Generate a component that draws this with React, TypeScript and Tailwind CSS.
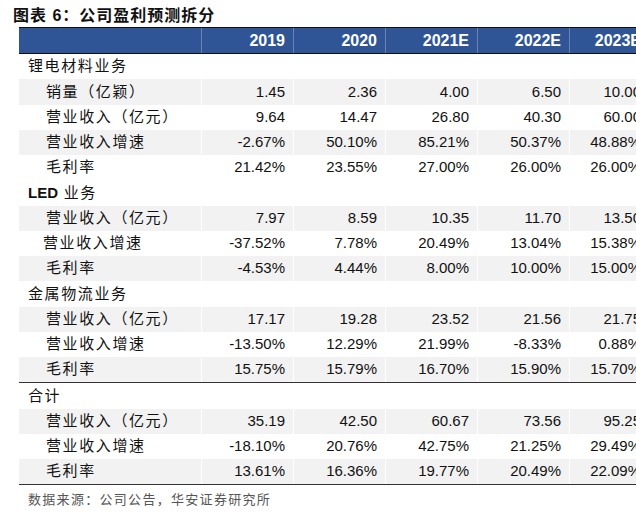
import React from 'react';

type Row = {
  label: string;
  values?: string[];
  kind: 'section' | 'item';
  shaded?: boolean;
  indent?: string;
};

const years = ['2019', '2020', '2021E', '2022E', '2023E'];

const rows: Row[] = [
  { label: '锂电材料业务', kind: 'section' },
  { label: '销量（亿颖）', kind: 'item', shaded: true, values: ['1.45', '2.36', '4.00', '6.50', '10.00'] },
  { label: '营业收入（亿元）', kind: 'item', values: ['9.64', '14.47', '26.80', '40.30', '60.00'] },
  { label: '营业收入增速', kind: 'item', shaded: true, values: ['-2.67%', '50.10%', '85.21%', '50.37%', '48.88%'] },
  { label: '毛利率', kind: 'item', values: ['21.42%', '23.55%', '27.00%', '26.00%', '26.00%'] },
  { label: 'LED 业务', kind: 'section' },
  { label: '营业收入（亿元）', kind: 'item', shaded: true, values: ['7.97', '8.59', '10.35', '11.70', '13.50'] },
  { label: '营业收入增速', kind: 'item', indent: 'pl-[24px]', values: ['-37.52%', '7.78%', '20.49%', '13.04%', '15.38%'] },
  { label: '毛利率', kind: 'item', shaded: true, values: ['-4.53%', '4.44%', '8.00%', '10.00%', '15.00%'] },
  { label: '金属物流业务', kind: 'section' },
  { label: '营业收入（亿元）', kind: 'item', shaded: true, values: ['17.17', '19.28', '23.52', '21.56', '21.75'] },
  { label: '营业收入增速', kind: 'item', values: ['-13.50%', '12.29%', '21.99%', '-8.33%', '0.88%'] },
  { label: '毛利率', kind: 'item', shaded: true, values: ['15.75%', '15.79%', '16.70%', '15.90%', '15.70%'] },
];

const totals: Row[] = [
  { label: '合计', kind: 'section' },
  { label: '营业收入（亿元）', kind: 'item', shaded: true, values: ['35.19', '42.50', '60.67', '73.56', '95.25'] },
  { label: '营业收入增速', kind: 'item', values: ['-18.10%', '20.76%', '42.75%', '21.25%', '29.49%'] },
  { label: '毛利率', kind: 'item', shaded: true, values: ['13.61%', '16.36%', '19.77%', '20.49%', '22.09%'] },
];

const font = "font-['Liberation_Sans','Noto_Sans_CJK_SC',sans-serif]";

// last column is narrower, it runs off the right edge like the source image
const colW = (i: number) => (i === 4 ? 'w-[80px]' : 'w-[92px]');

function TableRow({ row }: { row: Row }) {
  const bg = row.shaded ? 'bg-[#f2f2f2]' : 'bg-white';
  return (
    <div className={`flex h-[25.25px] items-center ${bg}`}>
      <div
        className={`w-[182px] shrink-0 tracking-[1.6px] text-[15px] text-[#111] ${
          row.kind === 'section' ? 'pl-[9px]' : row.indent ?? 'pl-[27px]'
        }`}
      >
        {row.label === 'LED 业务' ? (
          <span>
            <span className="font-bold tracking-normal">LED</span> 业务
          </span>
        ) : (
          row.label
        )}
      </div>
      {row.values?.map((v, i) => (
        <div
          key={i}
          className={`flex h-full ${colW(i)} shrink-0 items-center justify-end border-l border-white pr-[8px] text-[15px] text-[#111]`}
        >
          {v}
        </div>
      ))}
    </div>
  );
}

export default function App() {
  return (
    <div className={`h-[523px] w-[636px] overflow-hidden bg-white ${font}`}>
      <div className="pl-[13px] pt-[6px] text-[16px] font-bold leading-[20px] tracking-[1px] text-[#111]">
        图表 6：公司盈利预测拆分
      </div>

      <div className="mt-[1px] ml-[19px] w-[630px]">
        <div className="flex h-[27px] items-center border-y border-[#111] bg-[#2f5597]">
          <div className="w-[182px] shrink-0" />
          {years.map((y, i) => (
            <div
              key={y}
              className={`flex h-full ${colW(i)} shrink-0 items-center justify-end border-l border-[#6d84b3] pr-[8px] text-[16px] font-bold text-white`}
            >
              {y}
            </div>
          ))}
        </div>

        <div className="border-b border-[#333]">
          {rows.map((r, i) => (
            <TableRow key={i} row={r} />
          ))}
        </div>

        <div className="border-b border-[#333]">
          {totals.map((r, i) => (
            <TableRow key={i} row={r} />
          ))}
        </div>
      </div>

      <div className="pl-[28px] pt-[5px] text-[13px] tracking-[1.3px] text-[#555]">
        数据来源：公司公告，华安证券研究所
      </div>
    </div>
  );
}
